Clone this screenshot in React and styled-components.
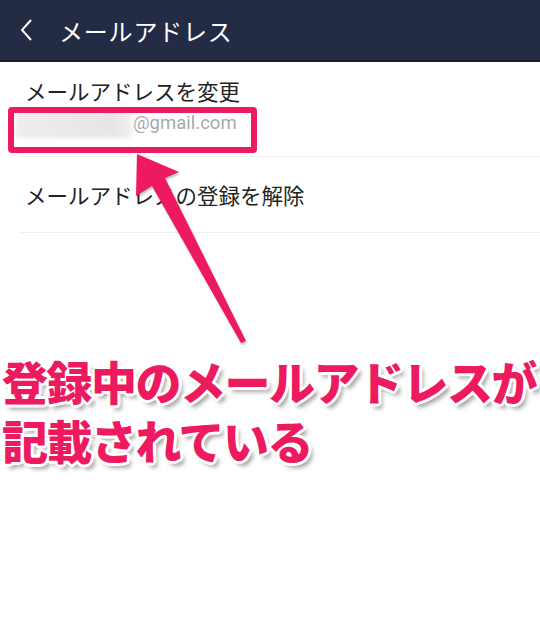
import React from 'react';
import styled, { createGlobalStyle } from 'styled-components';

const GlobalStyle = createGlobalStyle`
  body {
    margin: 0;
    font-family: 'Noto Sans CJK JP', 'Noto Sans', sans-serif;
  }
`;

const Screen = styled.div`
  position: relative;
  width: 540px;
  height: 636px;
  overflow: hidden;
  background: #fff;
`;

const Header = styled.div`
  height: 60px;
  background: #232b45;
  border-bottom: 2px solid #171d30;
  display: flex;
  align-items: center;
  padding-left: 19px;
  gap: 26px;
  color: #fff;
`;

const Title = styled.div`
  font-size: 24px;
  letter-spacing: 0.8px;
`;

const List = styled.div`
  padding-left: 20px;
`;

const Item = styled.div`
  height: ${(p) => p.h}px;
  box-sizing: border-box;
  border-bottom: 1px solid #efefef;
  display: flex;
  flex-direction: column;
  justify-content: ${(p) => (p.top ? 'flex-start' : 'center')};
  padding-top: ${(p) => (p.top ? 14 : 0)}px;
  padding-left: 5px;
`;

const ItemLabel = styled.div`
  font-size: 21.5px;
  line-height: 30px;
  color: #222;
`;

const Email = styled.div`
  display: flex;
  align-items: center;
  margin-top: 5px;
  margin-left: -10px;
  height: 24px;
  font-family: Roboto, 'Liberation Sans', sans-serif;
  font-size: 18.5px;
  color: #a9a9a9;
`;

const Blur = styled.span`
  width: 118px;
  height: 30px;
  background: linear-gradient(90deg, #eeeeee, #e6e6e6 85%, #f4f4f4);
  filter: blur(2px);
`;

const Caption = styled.div`
  margin-top: 118px;
  padding-left: 2px;
  font-size: 46px;
  font-weight: 900;
  line-height: 59px;
  letter-spacing: -1.5px;
  color: #ee1a5f;
  white-space: nowrap;
  text-shadow:
    3px 0 0 #fff, -3px 0 0 #fff, 0 3px 0 #fff, 0 -3px 0 #fff,
    2px 2px 0 #fff, -2px -2px 0 #fff, 2px -2px 0 #fff, -2px 2px 0 #fff,
    4px 5px 4px rgba(0, 0, 0, 0.35);
`;

const Highlight = styled.div`
  position: absolute;
  left: 8px;
  top: 107px;
  width: 249px;
  height: 46px;
  box-sizing: border-box;
  border: 6px solid #ee1a5f;
  border-radius: 4px;
`;

const Arrow = styled.svg`
  position: absolute;
  left: 0;
  top: 0;
  filter: drop-shadow(1px 2px 1px rgba(0, 0, 0, 0.25));
`;

export default function App() {
  return (
    <Screen>
      <GlobalStyle />
      <Header>
        <svg width="14" height="24" viewBox="0 0 14 24">
          <path d="M12 2 L3 12 L12 22" fill="none" stroke="#fff" strokeWidth="2" />
        </svg>
        <Title>メールアドレス</Title>
      </Header>
      <List>
        <Item h={95} top>
          <ItemLabel>メールアドレスを変更</ItemLabel>
          <Email>
            <Blur />
            @gmail.com
          </Email>
        </Item>
        <Item h={76}>
          <ItemLabel>メールアドレスの登録を解除</ItemLabel>
        </Item>
      </List>
      <Caption>
        登録中のメールアドレスが
        <br />
        記載されている
      </Caption>
      <Highlight />
      <Arrow width="540" height="636">
        <polygon
          points="137,154 179,172 165,178 246,341 241,343 152,186 136,196"
          fill="#ee1a5f"
        />
      </Arrow>
    </Screen>
  );
}
